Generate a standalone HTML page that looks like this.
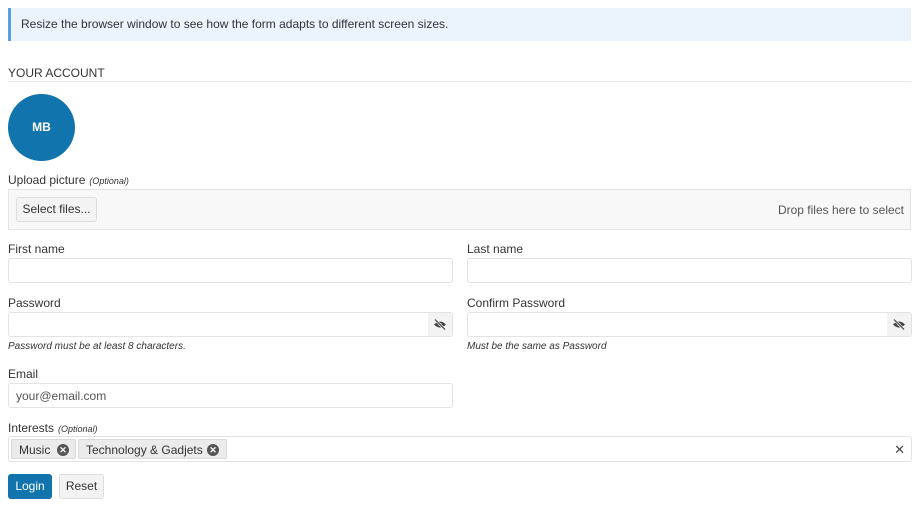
<!DOCTYPE html>
<html><head><meta charset="utf-8"><style>
*{box-sizing:border-box}
body{margin:0;width:923px;height:508px;background:#fff;font-family:"Liberation Sans",sans-serif;font-size:12px;color:#333;position:relative;overflow:hidden}
.a{position:absolute}
.info{left:8px;top:8px;width:903px;height:33px;background:#ebf3fc;border-left:3px solid #5a9de6;padding:9px 0 0 10px;color:#333}
.lbl{font-size:12px;color:#333}
.opt{font-size:9px;font-style:italic;margin-left:4px}
.inp{border:1px solid #e3e3e3;border-radius:3px;height:25px;background:#fff}
.hint{font-size:10px;font-style:italic;color:#333}
.eye{position:absolute;right:0;top:0;width:24px;height:23px;background:#f3f3f3;border-radius:0 3px 3px 0}
.chip{position:absolute;top:2px;height:20px;background:#ebebeb;border:1px solid #d9d9d9;border-radius:2px;padding:3px 0 0 7px;color:#333}
.x{position:absolute;top:4px;width:12px;height:12px;border-radius:50%;background:#555;color:#fff;font-size:9px;line-height:12px;text-align:center;font-weight:bold}
</style></head><body>
<div class="a info">Resize the browser window to see how the form adapts to different screen sizes.</div>
<div class="a" style="left:8px;top:66px">YOUR ACCOUNT</div>
<div class="a" style="left:8px;top:81px;width:903px;height:1px;background:#e6e6e6"></div>
<div class="a" style="left:8px;top:94px;width:67px;height:67px;border-radius:50%;background:#1274ac;color:#fff;font-weight:bold;text-align:center;line-height:67px">MB</div>
<div class="a lbl" style="left:8px;top:173px">Upload picture<span class="opt">(Optional)</span></div>
<div class="a" style="left:8px;top:189px;width:903px;height:41px;background:#f8f8f8;border:1px solid #e5e5e5">
<div class="a" style="left:7px;top:7px;width:81px;height:25px;border:1px solid #ddd;border-radius:3px;background:#f3f3f3;text-align:center;line-height:23px">Select files...</div>
<div class="a" style="right:6px;top:13px;color:#555">Drop files here to select</div></div>
<div class="a lbl" style="left:8px;top:242px">First name</div>
<div class="a inp" style="left:8px;top:258px;width:445px"></div>
<div class="a lbl" style="left:467px;top:242px">Last name</div>
<div class="a inp" style="left:467px;top:258px;width:445px"></div>
<div class="a lbl" style="left:8px;top:296px">Password</div>
<div class="a inp" style="left:8px;top:312px;width:445px"><div class="eye"><svg width="24" height="23" viewBox="0 0 24 23"><path d="M6 11.5q6-6 12 0q-6 6-12 0z" fill="#444"/><circle cx="12" cy="11.5" r="1.5" fill="#f3f3f3"/><path d="M7 6.5l10 10" stroke="#f3f3f3" stroke-width="2.5"/><path d="M7 6.5l10 10" stroke="#444" stroke-width="1.2"/></svg></div></div>
<div class="a hint" style="left:8px;top:341px">Password must be at least 8 characters.</div>
<div class="a lbl" style="left:467px;top:296px">Confirm Password</div>
<div class="a inp" style="left:467px;top:312px;width:445px"><div class="eye"><svg width="24" height="23" viewBox="0 0 24 23"><path d="M6 11.5q6-6 12 0q-6 6-12 0z" fill="#444"/><circle cx="12" cy="11.5" r="1.5" fill="#f3f3f3"/><path d="M7 6.5l10 10" stroke="#f3f3f3" stroke-width="2.5"/><path d="M7 6.5l10 10" stroke="#444" stroke-width="1.2"/></svg></div></div>
<div class="a hint" style="left:467px;top:341px">Must be the same as Password</div>
<div class="a lbl" style="left:8px;top:367px">Email</div>
<div class="a inp" style="left:8px;top:383px;width:445px;padding:5px 0 0 7px;color:#555">your@email.com</div>
<div class="a lbl" style="left:8px;top:421px">Interests<span class="opt">(Optional)</span></div>
<div class="a inp" style="left:8px;top:436px;width:904px;height:26px">
<div class="chip" style="left:2px;width:65px">Music<span class="x" style="left:45px">✕</span></div>
<div class="chip" style="left:69px;width:149px">Technology &amp; Gadjets<span class="x" style="left:128px">✕</span></div>
<div class="a" style="right:6px;top:5px;font-size:13px;color:#444">✕</div></div>
<div class="a" style="left:8px;top:474px;width:44px;height:25px;background:#1274ac;border-radius:3px;color:#fff;text-align:center;line-height:25px">Login</div>
<div class="a" style="left:59px;top:474px;width:45px;height:25px;background:#f3f3f3;border:1px solid #ddd;border-radius:3px;text-align:center;line-height:23px">Reset</div>
</body></html>
